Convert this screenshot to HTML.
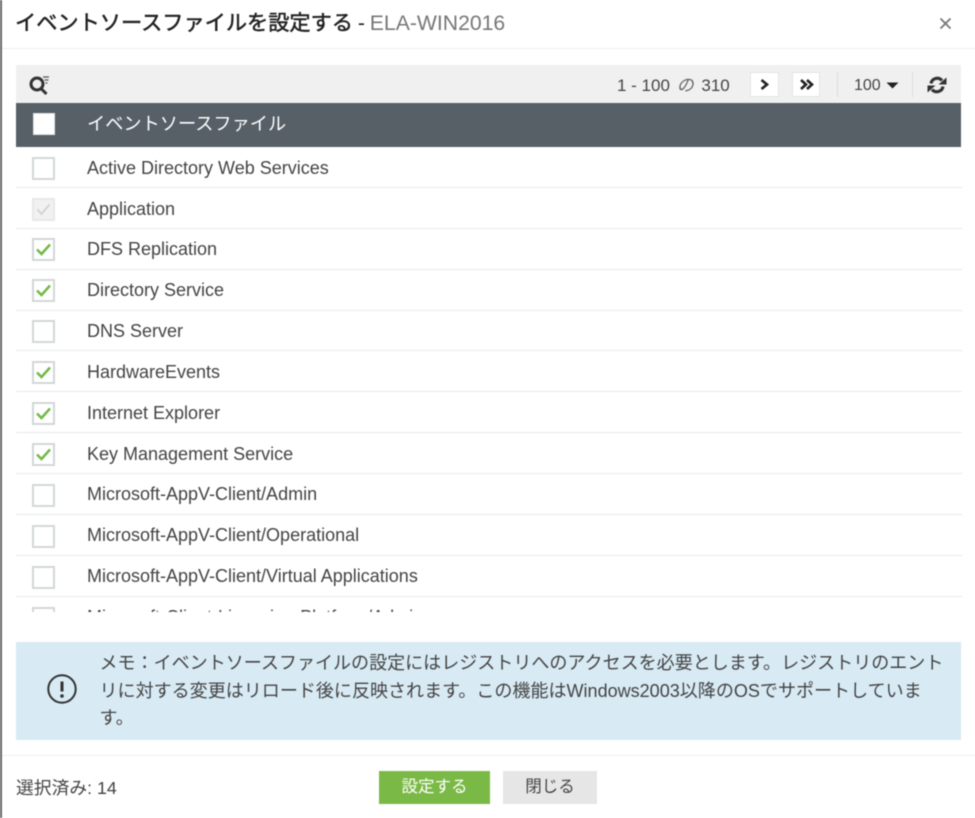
<!DOCTYPE html>
<html lang="ja"><head><meta charset="utf-8"><title>イベントソースファイル</title>
<style>
*{box-sizing:border-box}
html,body{margin:0;padding:0;width:975px;height:818px;overflow:hidden;background:#fff}
body{font-family:"Liberation Sans","Noto Sans CJK JP",sans-serif;color:#444;position:relative}
#p{position:absolute;left:0;top:0;width:975px;height:818px;filter:blur(.5px)}
.a{position:absolute;white-space:nowrap}
.l{position:absolute;left:16px;width:946px;height:1px;background:#e8eaea}
.c{position:absolute;left:32px;width:23px;height:23px;background:#fff;border:2px solid #d4d7d7}
.c svg{position:absolute;left:1px;top:1px}
.t{position:absolute;left:87px;font-size:18px;line-height:22px;color:#444;white-space:nowrap}
</style></head><body>
<div id="p">
<div class="a" style="left:0;top:0;width:2px;height:818px;background:#666"></div>
<div class="a" style="left:15px;top:10px;font-size:21.2px;line-height:28px;color:#222;-webkit-text-stroke:.5px #222">イベントソースファイルを設定する <span style="-webkit-text-stroke:0;color:#222;margin-left:-1px">-</span> <span style="color:#777;-webkit-text-stroke:0;margin-left:-1px">ELA-WIN2016</span></div>
<svg class="a" style="left:939px;top:17px" width="13" height="13" viewBox="0 0 13 13"><path d="M1.5 1.5L11.5 11.5M11.5 1.5L1.5 11.5" stroke="#777" stroke-width="1.8" fill="none"/></svg>
<div class="a" style="left:2px;top:48px;width:973px;height:1px;background:#eceeee"></div>

<div class="a" style="left:16px;top:65px;width:945px;height:38px;background:#f0f0f0"></div>
<svg class="a" style="left:28px;top:73px" width="23" height="24" viewBox="0 0 23 24"><circle cx="9" cy="11" r="6" fill="none" stroke="#333" stroke-width="3"/><path d="M13 15.5L18.5 21" stroke="#333" stroke-width="3" fill="none"/><path d="M15 4h6M16.5 7h4M17.5 10h2" stroke="#555" stroke-width="1.2" fill="none"/></svg>
<div class="a" style="left:617px;top:75px;font-size:17px;line-height:22px;color:#444">1 - 100 <span style="font-style:italic;color:#666;margin:0 3px 0 2px">の</span> 310</div>
<div class="a" style="left:750px;top:72px;width:29px;height:25px;background:#fff;border:1px solid #e2e6e6"></div>
<svg class="a" style="left:758px;top:78px" width="13" height="13" viewBox="0 0 13 13"><path d="M3.5 2L9 6.5L3.5 11" stroke="#222" stroke-width="2.6" fill="none"/></svg>
<div class="a" style="left:792px;top:72px;width:28px;height:25px;background:#fff;border:1px solid #e2e6e6"></div>
<svg class="a" style="left:799px;top:78px" width="15" height="13" viewBox="0 0 15 13"><path d="M2 2L7 6.5L2 11M8 2L13 6.5L8 11" stroke="#222" stroke-width="2.6" fill="none"/></svg>
<div class="a" style="left:837px;top:72px;width:1px;height:25px;background:#dcdcdc"></div>
<div class="a" style="left:854px;top:75px;font-size:16px;line-height:22px;color:#444">100</div>
<svg class="a" style="left:886px;top:82px" width="13" height="7" viewBox="0 0 13 7"><path d="M.5 .5H12.5L6.5 6.5Z" fill="#222"/></svg>
<div class="a" style="left:912px;top:72px;width:1px;height:25px;background:#dcdcdc"></div>
<svg class="a" style="left:927px;top:75px" width="20" height="20" viewBox="0 0 20 20"><path d="M4 8.5A6.3 6.3 0 0 1 15 5.5M16 11.5A6.3 6.3 0 0 1 5 14.5" stroke="#333" stroke-width="3.2" fill="none"/><path d="M11.5 9.5H19.5V2.5Z M8.5 10.5H.5V17.5Z" fill="#333"/></svg>

<div class="a" style="left:16px;top:103px;width:945px;height:44px;background:#566066"></div>
<div class="a" style="left:33px;top:113px;width:22px;height:22px;background:#fff;border:1px solid #e4e6e6"></div>
<div class="a" style="left:87px;top:112px;font-size:18.2px;line-height:24px;color:#fff">イベントソースファイル</div>

<div class="a" style="left:0;top:147px;width:975px;height:465px;overflow:hidden">
<div style="position:absolute;left:0;top:-147px;width:975px;height:700px">
<div class="c" style="top:157px"></div><div class="t" style="top:157px">Active Directory Web Services</div><div class="l" style="top:187px"></div>
<div class="c" style="top:198px;background:#f1f1f1;border-color:#e8e8e8"><svg width="17" height="17" viewBox="0 0 17 17"><path d="M2.5 8.5L6.5 13L14.5 3.5" stroke="#d2d2d2" stroke-width="1.8" fill="none"/></svg></div><div class="t" style="top:198px">Application</div><div class="l" style="top:228px"></div>
<div class="c" style="top:238px"><svg width="17" height="17" viewBox="0 0 17 17"><path d="M2 8.5L6.5 13L15 3.5" stroke="#74b84a" stroke-width="2.5" fill="none"/></svg></div><div class="t" style="top:238px">DFS Replication</div><div class="l" style="top:269px"></div>
<div class="c" style="top:279px"><svg width="17" height="17" viewBox="0 0 17 17"><path d="M2 8.5L6.5 13L15 3.5" stroke="#74b84a" stroke-width="2.5" fill="none"/></svg></div><div class="t" style="top:279px">Directory Service</div><div class="l" style="top:310px"></div>
<div class="c" style="top:320px"></div><div class="t" style="top:320px">DNS Server</div><div class="l" style="top:350px"></div>
<div class="c" style="top:361px"><svg width="17" height="17" viewBox="0 0 17 17"><path d="M2 8.5L6.5 13L15 3.5" stroke="#74b84a" stroke-width="2.5" fill="none"/></svg></div><div class="t" style="top:361px">HardwareEvents</div><div class="l" style="top:391px"></div>
<div class="c" style="top:402px"><svg width="17" height="17" viewBox="0 0 17 17"><path d="M2 8.5L6.5 13L15 3.5" stroke="#74b84a" stroke-width="2.5" fill="none"/></svg></div><div class="t" style="top:402px">Internet Explorer</div><div class="l" style="top:432px"></div>
<div class="c" style="top:443px"><svg width="17" height="17" viewBox="0 0 17 17"><path d="M2 8.5L6.5 13L15 3.5" stroke="#74b84a" stroke-width="2.5" fill="none"/></svg></div><div class="t" style="top:443px">Key Management Service</div><div class="l" style="top:473px"></div>
<div class="c" style="top:484px"></div><div class="t" style="top:483px">Microsoft-AppV-Client/Admin</div><div class="l" style="top:514px"></div>
<div class="c" style="top:525px"></div><div class="t" style="top:524px">Microsoft-AppV-Client/Operational</div><div class="l" style="top:555px"></div>
<div class="c" style="top:566px"></div><div class="t" style="top:565px">Microsoft-AppV-Client/Virtual Applications</div><div class="l" style="top:596px"></div>
<div class="c" style="top:607px"></div><div class="t" style="top:606px">Microsoft-Client-Licensing-Platform/Admin</div>
</div></div>

<div class="a" style="left:16px;top:642px;width:945px;height:98px;background:#d8eaf4"></div>
<svg class="a" style="left:46px;top:673px" width="32" height="32" viewBox="0 0 32 32"><circle cx="16" cy="16" r="13.7" fill="none" stroke="#333" stroke-width="2"/><path d="M16 8.5V18.5" stroke="#333" stroke-width="3" fill="none"/><circle cx="16" cy="23" r="1.8" fill="#333"/></svg>
<div class="a" style="left:99.5px;top:650px;width:860px;font-size:18.05px;line-height:27.5px;color:#444">メモ：イベントソースファイルの設定にはレジストリへのアクセスを必要とします。レジストリのエント<br>リに対する変更はリロード後に反映されます。この機能はWindows2003以降のOSでサポートしていま<br>す。</div>

<div class="a" style="left:2px;top:755px;width:973px;height:1px;background:#eceeee"></div>
<div class="a" style="left:16px;top:777px;font-size:17.8px;line-height:22px;color:#444">選択済み: 14</div>
<div class="a" style="left:379px;top:771px;width:111px;height:33px;background:#7ab946;color:#fff;font-size:16.5px;line-height:33px;text-align:center">設定する</div>
<div class="a" style="left:503px;top:771px;width:94px;height:33px;background:#e6e6e6;color:#444;font-size:16.5px;line-height:33px;text-align:center">閉じる</div>
</div>
</body></html>
